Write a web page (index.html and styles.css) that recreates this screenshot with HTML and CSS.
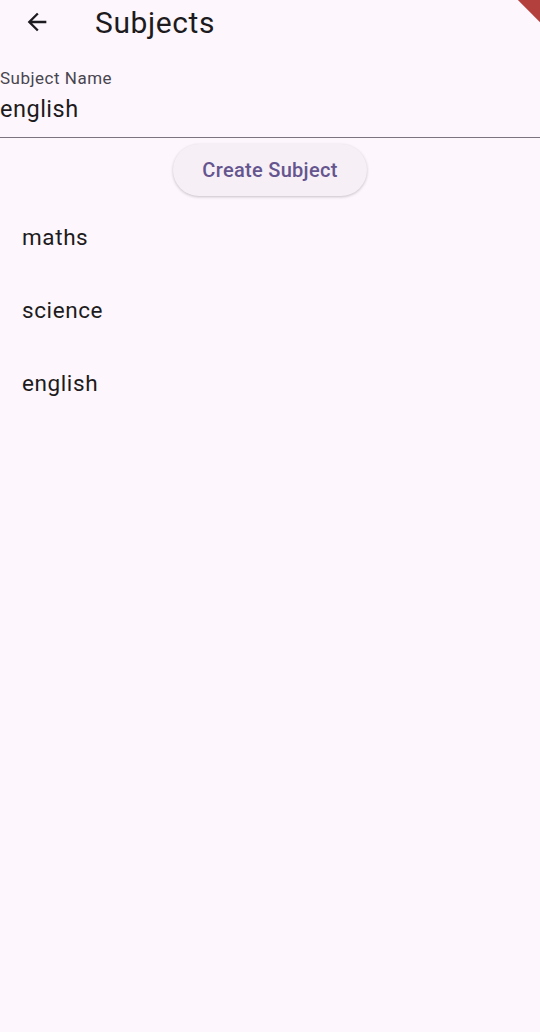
FILE: index.html
```html
<!DOCTYPE html>
<html>
<head>
<meta charset="utf-8">
<link rel="stylesheet" href="styles.css">
</head>
<body>
<div class="page">
  <header class="appbar">
    <button class="back" aria-label="Back">
      <svg width="28" height="28" viewBox="0 0 24 24"><path d="M20 11H7.83l5.59-5.59L12 4l-8 8 8 8 1.41-1.41L7.83 13H20v-2z" fill="#1d1b20"/></svg>
    </button>
    <h1 class="title">Subjects</h1>
  </header>
  <div class="field">
    <label class="label">Subject Name</label>
    <div class="value">english</div>
  </div>
  <div class="actions">
    <button class="create">Create Subject</button>
  </div>
  <ul class="list">
    <li>maths</li>
    <li>science</li>
    <li>english</li>
  </ul>
  <div class="debug"></div>
</div>
</body>
</html>
```

FILE: styles.css
```css
html, body {
  margin: 0;
  padding: 0;
  background: #fdf7fd;
}
.page {
  position: relative;
  width: 540px;
  height: 1032px;
  overflow: hidden;
  font-family: Roboto, "Noto Sans", sans-serif;
  color: #1d1b20;
}
.appbar {
  display: flex;
  align-items: center;
  height: 44px;
}
.back {
  border: 0;
  background: none;
  padding: 0;
  margin-left: 23px;
  width: 28px;
  height: 28px;
  display: flex;
}
.title {
  margin: 0 0 0 44px;
  font-size: 30px;
  font-weight: 400;
  letter-spacing: 0.6px;
}
.field {
  margin-top: 24px;
  border-bottom: 1.5px solid #7a757f;
  padding-bottom: 14px;
}
.label {
  display: block;
  font-size: 17px;
  color: #49454f;
  line-height: 20px;
  letter-spacing: 0.5px;
}
.value {
  font-size: 23.5px;
  line-height: 28px;
  margin-top: 7px;
  letter-spacing: 0.5px;
}
.actions {
  display: flex;
  justify-content: center;
  padding-top: 6px;
}
.create {
  width: 194px;
  height: 52px;
  border: 0;
  border-radius: 26px;
  background: #f6eff6;
  box-shadow: 0 1px 3px rgba(0,0,0,0.22);
  color: #65558f;
  font-family: Roboto, sans-serif;
  font-size: 20px;
  font-weight: 500;
  letter-spacing: 0.3px;
}
.list {
  list-style: none;
  margin: 0;
  padding: 5px 0 0 22px;
}
.list li {
  height: 73px;
  line-height: 73px;
  font-size: 22.5px;
  letter-spacing: 0.6px;
}
.debug {
  position: absolute;
  top: 8px;
  right: -70px;
  width: 120px;
  height: 20px;
  background: #b3403c;
  transform: rotate(45deg);
  transform-origin: center;
}
```
